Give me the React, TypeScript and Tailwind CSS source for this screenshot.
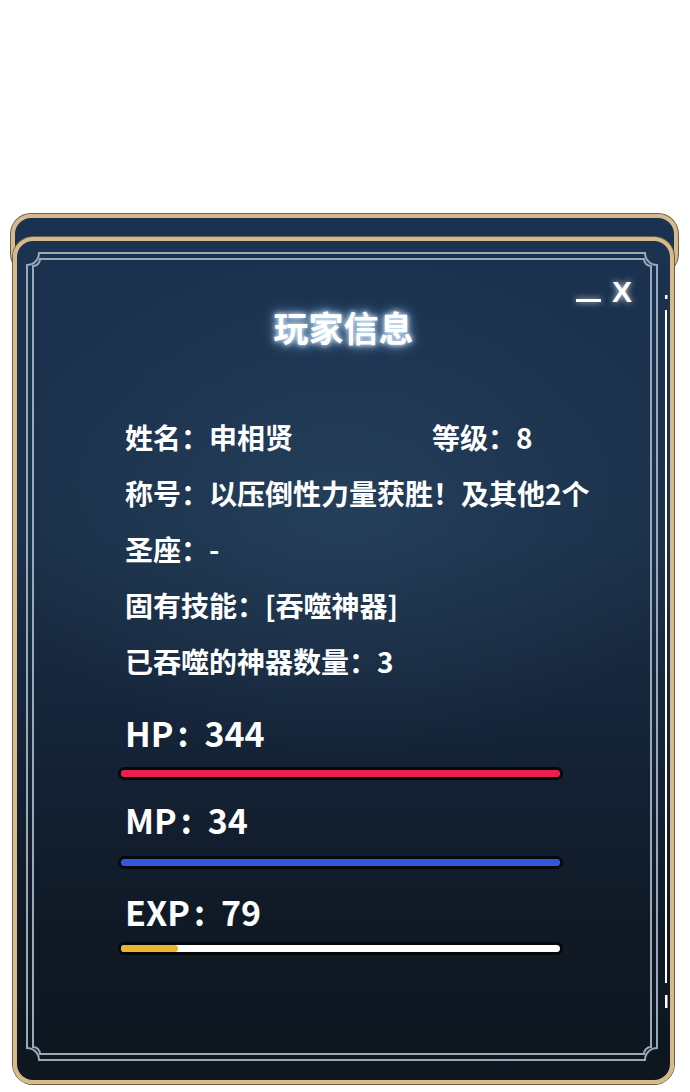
const font = { fontFamily: '"Noto Sans CJK SC", "Noto Sans", sans-serif' };

function Frame() {
  // decorative double line frame + scrollbar, drawn over the panel
  const o = { l: 14, t: 16, r: 644, b: 823, n: 12 };
  const i = { l: 20, t: 22, r: 638, b: 817, n: 7 };
  const path = (f: typeof o) =>
    `M${f.l + f.n} ${f.t} H${f.r - f.n} A${f.n} ${f.n} 0 0 0 ${f.r} ${f.t + f.n} V${f.b - f.n} A${f.n} ${f.n} 0 0 0 ${f.r - f.n} ${f.b} H${f.l + f.n} A${f.n} ${f.n} 0 0 0 ${f.l} ${f.b - f.n} V${f.t + f.n} A${f.n} ${f.n} 0 0 0 ${f.l + f.n} ${f.t} Z`;
  return (
    <svg className="pointer-events-none absolute left-[-4px] top-[-4px]" width="661" height="847" viewBox="0 0 661 847">
      <path d={path(o)} fill="none" stroke="#9aa9ba" strokeWidth="2" />
      <path d={path(i)} fill="none" stroke="#9aa9ba" strokeWidth="2" />
      <rect x="652" y="58" width="2.5" height="4" fill="#fff" />
      <rect x="652" y="73" width="2" height="673" fill="#fff" />
      <rect x="652" y="758" width="2.5" height="13" fill="#fff" />
    </svg>
  );
}

function Bar({ fill, pct, track }: { fill: string; pct: number; track: string }) {
  return (
    <div className={`ml-[101px] h-[13px] w-[445px] rounded-full border-[3px] border-[#05080c] ${track} overflow-hidden`}>
      <div className={`h-full rounded-full ${fill}`} style={{ width: `${pct}%` }} />
    </div>
  );
}

export default function App() {
  return (
    <div className="min-h-[1092px] bg-white pt-[214px]" style={font}>
      {/* back window */}
      <div className="ml-[11px] h-[60px] w-[667px] rounded-[20px] border-[4px] border-[#d7ba8c] bg-[#1b3150] shadow-[0_0_0_1px_#6e5d48]" />

      {/* front window */}
      <div className="relative z-10 -mt-[37px] ml-[13px] h-[847px] w-[661px] rounded-[20px] border-[4px] border-[#d7ba8c] bg-[radial-gradient(ellipse_55%_30%_at_50%_32%,rgba(44,74,104,0.55),transparent),linear-gradient(to_bottom,#1b3250_0%,#1b3049_35%,#142235_62%,#0f1823_85%,#0e1620_100%)] shadow-[0_0_0_1px_#6e5d48]">
        <Frame />

        <div className="flex items-center justify-end gap-[11px] pr-[38px] pt-[38px] text-white [text-shadow:0_0_6px_rgba(255,255,255,0.8)]">
          <div className="mt-[16px] h-[3px] w-[25px] bg-white shadow-[0_0_6px_rgba(255,255,255,0.8)]" />
          <span className="text-[30px] font-bold leading-[26px]" style={{ fontFamily: '"Liberation Sans", sans-serif' }}>X</span>
        </div>

        <h1 className="mt-[2px] text-center text-[35px] font-bold leading-[40px] text-white [text-shadow:0_0_5px_rgba(220,240,255,1),0_0_10px_rgba(170,215,255,0.8),0_0_16px_rgba(150,200,255,0.5)]">
          玩家信息
        </h1>

        <div className="mt-[62px] pl-[108px] text-[28px] font-bold leading-[56px] text-white">
          <div className="flex">
            <span className="w-[307px]">姓名：申相贤</span>
            <span>等级：8</span>
          </div>
          <div>称号：以压倒性力量获胜！及其他2个</div>
          <div>圣座：-</div>
          <div>固有技能：[吞噬神器]</div>
          <div>已吞噬的神器数量：3</div>
        </div>

        <div className="mt-[24px] pl-[108px] text-[34px] font-semibold leading-[40px] text-white">HP<span className="ml-[4px] mr-[16px]">:</span>344</div>
        <div className="mt-[14px]">
          <Bar fill="bg-[#ea1f4b]" pct={100} track="bg-[#ea1f4b]" />
        </div>

        <div className="mt-[20px] pl-[108px] text-[34px] font-semibold leading-[40px] text-white">MP<span className="ml-[4px] mr-[16px]">:</span>34</div>
        <div className="mt-[16px]">
          <Bar fill="bg-[#3257d8]" pct={100} track="bg-[#3257d8]" />
        </div>

        <div className="mt-[23px] pl-[108px] text-[34px] font-semibold leading-[40px] text-white">EXP<span className="ml-[4px] mr-[16px]">:</span>79</div>
        <div className="mt-[10px]">
          <Bar fill="bg-[#eab42c]" pct={13} track="bg-white" />
        </div>
      </div>
    </div>
  );
}
